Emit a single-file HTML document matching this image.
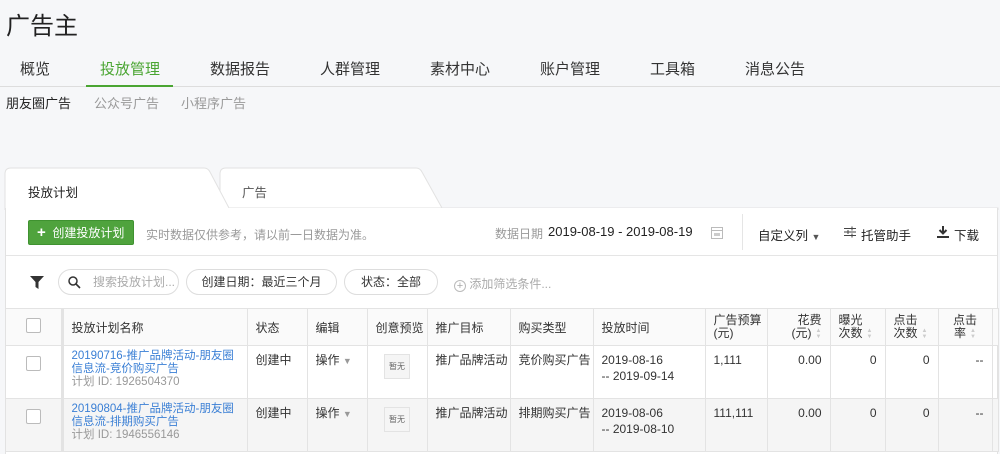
<!DOCTYPE html><html><head><meta charset="utf-8"><style>
*{box-sizing:border-box;margin:0;padding:0}
body{width:1000px;height:454px;overflow:hidden;background:#f6f7f9;font-family:"Liberation Sans","Noto Sans CJK SC",sans-serif;color:#333;position:relative;font-size:12px}
.a{position:absolute;white-space:nowrap}
.nav span{position:absolute;top:58px;font-size:15px;color:#333}
td,th{border-right:1px solid #e3e3e3;border-bottom:1px solid #e3e3e3;vertical-align:top;text-align:left;font-weight:normal;padding:0 8px;font-size:12px}
th{height:37px;vertical-align:middle;background:#fafafa}
td{height:53px;padding-top:6px;line-height:16px}
tr.alt td{background:#f5f5f5}
.cb{display:inline-block;width:15px;height:15px;border:1px solid #bbb;border-radius:2px;background:#fff}
.pill{position:absolute;top:269px;height:26px;border:1px solid #ddd;border-radius:13px;background:#fff;font-size:12px;line-height:24px;text-align:center}
.so{display:inline-block;width:6px;vertical-align:middle;margin-left:4px;color:#ccc;font-size:6px;line-height:6px}
</style></head><body>
<div class="a" style="left:6px;top:6px;font-size:24px;color:#222">广告主</div>
<div class="nav"><span style="left:20px">概览</span><span style="left:100px;color:#4aa532">投放管理</span><span style="left:210px">数据报告</span><span style="left:320px">人群管理</span><span style="left:430px">素材中心</span><span style="left:540px">账户管理</span><span style="left:650px">工具箱</span><span style="left:745px">消息公告</span></div>
<div class="a" style="left:0;top:86px;width:1000px;height:1px;background:#ddd"></div>
<div class="a" style="left:86px;top:85px;width:87px;height:2px;background:#4aa532"></div>
<div class="a" style="left:6px;top:93px;font-size:13px;color:#222">朋友圈广告</div>
<div class="a" style="left:94px;top:93px;font-size:13px;color:#999">公众号广告</div>
<div class="a" style="left:181px;top:93px;font-size:13px;color:#999">小程序广告</div>
<svg class="a" style="left:0;top:160px" width="1000" height="50"><path d="M220 48 L220 14 Q220 8 226 8 L416 8 Q420 8 422 12 L442 48 Z" fill="#fff" stroke="#e2e2e2"/><path d="M5 50 L5 14 Q5 8 11 8 L204 8 Q208 8 210 12 L229 48 L998 48 L998 50 Z" fill="#fff" stroke="#e2e2e2"/><rect x="5.5" y="47" width="220" height="3" fill="#fff"/></svg>
<div class="a" style="left:28px;top:182px;font-size:12.5px;color:#222">投放计划</div>
<div class="a" style="left:242px;top:182px;font-size:12.5px;color:#555">广告</div>
<div class="a" style="left:5px;top:208px;width:993px;height:246px;background:#fff;border-left:1px solid #e2e2e2;border-right:1px solid #e2e2e2"></div>
<div class="a" style="left:28px;top:220px;width:106px;height:25px;background:#4fa33d;border:1px solid #3f9230;border-radius:2px;color:#fff;font-size:12px;line-height:23px;padding-left:8px"><b style="font-size:15px">+</b>&nbsp; 创建投放计划</div>
<div class="a" style="left:146px;top:226px;color:#999">实时数据仅供参考，请以前一日数据为准。</div>
<div class="a" style="left:495px;top:225px;color:#999">数据日期</div>
<div class="a" style="left:548px;top:224px;font-size:13px;color:#222">2019-08-19 - 2019-08-19</div>
<svg class="a" style="left:711px;top:226px" width="12" height="13"><rect x="0.5" y="1.5" width="11" height="11" fill="none" stroke="#bbb"/><line x1="0" y1="4.5" x2="12" y2="4.5" stroke="#bbb"/><rect x="3" y="7" width="6" height="3" fill="#ccc"/></svg>
<div class="a" style="left:742px;top:214px;width:1px;height:36px;background:#e5e5e5"></div>
<div class="a" style="left:758px;top:225px;font-size:12.5px;color:#222">自定义列 <span style="font-size:9px;color:#555">▼</span></div>
<svg class="a" style="left:844px;top:226px" width="12" height="12"><path d="M0 2.5H12M0 6H12M0 9.5H12" stroke="#444"/><path d="M8 0.5V4.5M4 4V8M8 7.5V11.5" stroke="#444"/></svg>
<div class="a" style="left:861px;top:225px;font-size:12.5px;color:#222">托管助手</div>
<svg class="a" style="left:937px;top:226px" width="12" height="13"><path d="M6 0V7M2.5 4L6 7.5 9.5 4" stroke="#333" stroke-width="2" fill="none"/><rect x="0" y="10" width="12" height="2" fill="#333"/></svg>
<div class="a" style="left:954px;top:225px;font-size:12.5px;color:#222">下载</div>
<div class="a" style="left:6px;top:255px;width:991px;height:1px;background:#e5e5e5"></div>
<svg class="a" style="left:30px;top:276px" width="14" height="13"><path d="M0 0H14L8.5 6V13L5.5 11V6Z" fill="#333"/></svg>
<div class="pill" style="left:58px;width:121px;text-align:left;padding-left:34px;color:#aaa">搜索投放计划...</div>
<svg class="a" style="left:68px;top:276px" width="13" height="13"><circle cx="5" cy="5" r="4" fill="none" stroke="#333" stroke-width="1.5"/><path d="M8 8L12 12" stroke="#333" stroke-width="1.6"/></svg>
<div class="pill" style="left:186px;width:151px">创建日期：最近三个月</div>
<div class="pill" style="left:344px;width:94px">状态：全部</div>
<div class="a" style="left:454px;top:275px;color:#aaa"><span style="display:inline-block;width:12px;height:12px;border:1px solid #bbb;border-radius:50%;font-size:11px;line-height:10px;text-align:center;vertical-align:-1px">+</span> 添加筛选条件...</div>
<table class="a" style="left:6px;top:308px;border-collapse:collapse;border-top:1px solid #e3e3e3;table-layout:fixed;width:992px">
<colgroup><col style="width:56px"><col style="width:185px"><col style="width:60px"><col style="width:60px"><col style="width:60px"><col style="width:83px"><col style="width:83px"><col style="width:112px"><col style="width:62px"><col style="width:63px"><col style="width:55px"><col style="width:53px"><col style="width:54px"><col style="width:6px"></colgroup>
<tr><th style="text-align:center;border-right:3px solid #e3e3e3"><span class="cb"></span></th><th>投放计划名称</th><th>状态</th><th>编辑</th><th>创意预览</th><th>推广目标</th><th>购买类型</th><th>投放时间</th><th style="line-height:13px">广告预算<br>(元)</th><th style="text-align:right;line-height:13px">花费<br>(元)<span class="so">▲<br>▼</span></th><th style="line-height:13px">曝光<br>次数<span class="so">▲<br>▼</span></th><th style="line-height:13px">点击<br>次数<span class="so">▲<br>▼</span></th><th style="line-height:13px;text-align:center">点击<br>率<span class="so">▲<br>▼</span></th><th></th></tr>
<tr><td style="text-align:center;border-right:3px solid #e3e3e3;padding-top:10px"><span class="cb"></span></td><td style="color:#3a7fd5;padding-top:4px;line-height:13px;font-size:11.5px">20190716-推广品牌活动-朋友圈<br>信息流-竞价购买广告<br><span style="color:#999">计划 ID: 1926504370</span></td><td>创建中</td><td>操作 <span style="color:#999;font-size:9px">▼</span></td><td style="text-align:center;padding-top:8px"><span style="display:inline-block;width:26px;height:25px;border:1px solid #e3e3e3;background:#f5f5f5;font-size:8px;line-height:23px;color:#666">暂无</span></td><td>推广品牌活动</td><td>竞价购买广告</td><td>2019-08-16<br>-- 2019-09-14</td><td>1,111</td><td style="text-align:right">0.00</td><td style="text-align:right">0</td><td style="text-align:right">0</td><td style="text-align:right">--</td><td></td></tr>
<tr class="alt"><td style="text-align:center;border-right:3px solid #e3e3e3;padding-top:10px"><span class="cb"></span></td><td style="color:#3a7fd5;padding-top:4px;line-height:13px;font-size:11.5px">20190804-推广品牌活动-朋友圈<br>信息流-排期购买广告<br><span style="color:#999">计划 ID: 1946556146</span></td><td>创建中</td><td>操作 <span style="color:#999;font-size:9px">▼</span></td><td style="text-align:center;padding-top:8px"><span style="display:inline-block;width:26px;height:25px;border:1px solid #e3e3e3;background:#f5f5f5;font-size:8px;line-height:23px;color:#666">暂无</span></td><td>推广品牌活动</td><td>排期购买广告</td><td>2019-08-06<br>-- 2019-08-10</td><td>111,111</td><td style="text-align:right">0.00</td><td style="text-align:right">0</td><td style="text-align:right">0</td><td style="text-align:right">--</td><td></td></tr>
</table>
</body></html>
